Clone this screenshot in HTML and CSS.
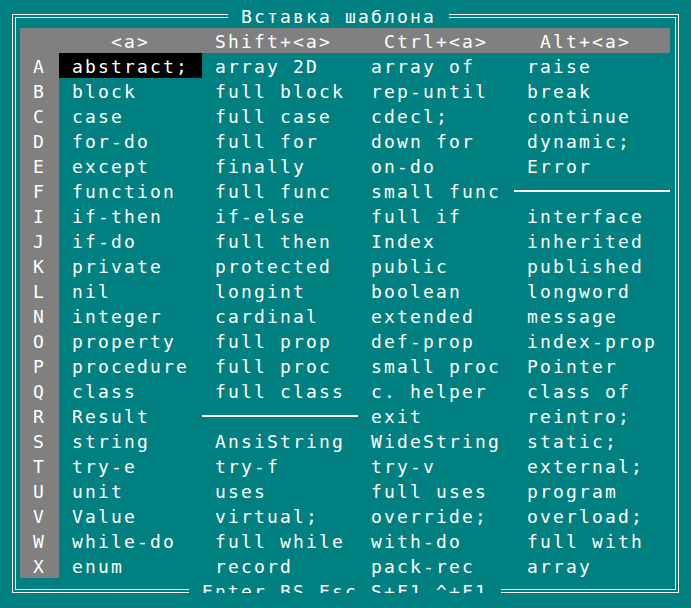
FILE: index.html
```html
<!DOCTYPE html>
<html lang="ru">
<head>
<meta charset="utf-8">
<title>Вставка шаблона</title>
<link rel="stylesheet" href="styles.css">
</head>
<body>
<div class="screen">
  <div class="frame">
    <div class="title">Вставка шаблона</div>
    <div class="frame-inner">
      <div class="table">
        <div class="hd"></div>
        <div class="hd h1">&lt;a&gt;</div>
        <div class="hd h2">Shift+&lt;a&gt;</div>
        <div class="hd h3">Ctrl+&lt;a&gt;</div>
        <div class="hd h4">Alt+&lt;a&gt;</div>

        <div class="key">A</div><div class="cell sel">abstract;</div><div class="cell">array 2D</div><div class="cell">array of</div><div class="cell">raise</div>
        <div class="key">B</div><div class="cell">block</div><div class="cell">full block</div><div class="cell">rep-until</div><div class="cell">break</div>
        <div class="key">C</div><div class="cell">case</div><div class="cell">full case</div><div class="cell">cdecl;</div><div class="cell">continue</div>
        <div class="key">D</div><div class="cell">for-do</div><div class="cell">full for</div><div class="cell">down for</div><div class="cell">dynamic;</div>
        <div class="key">E</div><div class="cell">except</div><div class="cell">finally</div><div class="cell">on-do</div><div class="cell">Error</div>
        <div class="key">F</div><div class="cell">function</div><div class="cell">full func</div><div class="cell">small func</div><div class="cell sep"></div>
        <div class="key">I</div><div class="cell">if-then</div><div class="cell">if-else</div><div class="cell">full if</div><div class="cell">interface</div>
        <div class="key">J</div><div class="cell">if-do</div><div class="cell">full then</div><div class="cell">Index</div><div class="cell">inherited</div>
        <div class="key">K</div><div class="cell">private</div><div class="cell">protected</div><div class="cell">public</div><div class="cell">published</div>
        <div class="key">L</div><div class="cell">nil</div><div class="cell">longint</div><div class="cell">boolean</div><div class="cell">longword</div>
        <div class="key">N</div><div class="cell">integer</div><div class="cell">cardinal</div><div class="cell">extended</div><div class="cell">message</div>
        <div class="key">O</div><div class="cell">property</div><div class="cell">full prop</div><div class="cell">def-prop</div><div class="cell">index-prop</div>
        <div class="key">P</div><div class="cell">procedure</div><div class="cell">full proc</div><div class="cell">small proc</div><div class="cell">Pointer</div>
        <div class="key">Q</div><div class="cell">class</div><div class="cell">full class</div><div class="cell">c. helper</div><div class="cell">class of</div>
        <div class="key">R</div><div class="cell">Result</div><div class="cell sep"></div><div class="cell">exit</div><div class="cell">reintro;</div>
        <div class="key">S</div><div class="cell">string</div><div class="cell">AnsiString</div><div class="cell">WideString</div><div class="cell">static;</div>
        <div class="key">T</div><div class="cell">try-e</div><div class="cell">try-f</div><div class="cell">try-v</div><div class="cell">external;</div>
        <div class="key">U</div><div class="cell">unit</div><div class="cell">uses</div><div class="cell">full uses</div><div class="cell">program</div>
        <div class="key">V</div><div class="cell">Value</div><div class="cell">virtual;</div><div class="cell">override;</div><div class="cell">overload;</div>
        <div class="key">W</div><div class="cell">while-do</div><div class="cell">full while</div><div class="cell">with-do</div><div class="cell">full with</div>
        <div class="key">X</div><div class="cell">enum</div><div class="cell">record</div><div class="cell">pack-rec</div><div class="cell">array</div>
      </div>
    </div>
    <div class="legend">Enter,BS,Esc,S+F1,^+F1</div>
  </div>
</div>
</body>
</html>
```

FILE: styles.css
```css
html, body {
  margin: 0;
  padding: 0;
  background: #008080;
}

body {
  color: #ffffff;
  font-family: "DejaVu Sans Mono", "Liberation Mono", monospace;
  font-size: 18px;
  letter-spacing: 2.16px;
  line-height: 25px;
}

.screen {
  padding: 14px 0 0 12px;
}

.frame {
  position: relative;
  display: block;
  width: max-content;
  border: 1px solid #ffffff;
  padding: 2px;
}

.frame-inner {
  border: 1px solid #ffffff;
  padding: 10px 5px 11px 4px;
}

.table {
  display: grid;
  grid-template-columns: 39px 143px 156px 156px 156px;
  grid-template-rows: repeat(22, 25px);
  height: 550px;
}

.hd,
.key,
.cell {
  box-sizing: border-box;
  height: 25px;
  padding-top: 1px;
  white-space: pre;
  overflow: hidden;
}

.hd {
  background: #808080;
}

.h1 { padding-left: 52px; }
.h2 { padding-left: 13px; }
.h3 { padding-left: 26px; }
.h4 { padding-left: 26px; }

.key {
  background: #808080;
  padding-left: 13px;
}

.cell {
  padding-left: 13px;
}

.sel {
  background: #000000;
}

.sep {
  background: linear-gradient(#ffffff, #ffffff) no-repeat 0 12px / 100% 2px;
}

.title,
.legend {
  position: absolute;
  height: 25px;
  padding: 1px 13px 0 13px;
  box-sizing: border-box;
  background: #008080;
  white-space: pre;
}

.title {
  left: 215px;
  top: -12px;
  width: 221px;
}

.legend {
  left: 176px;
  bottom: -11px;
  width: 312px;
}
```
